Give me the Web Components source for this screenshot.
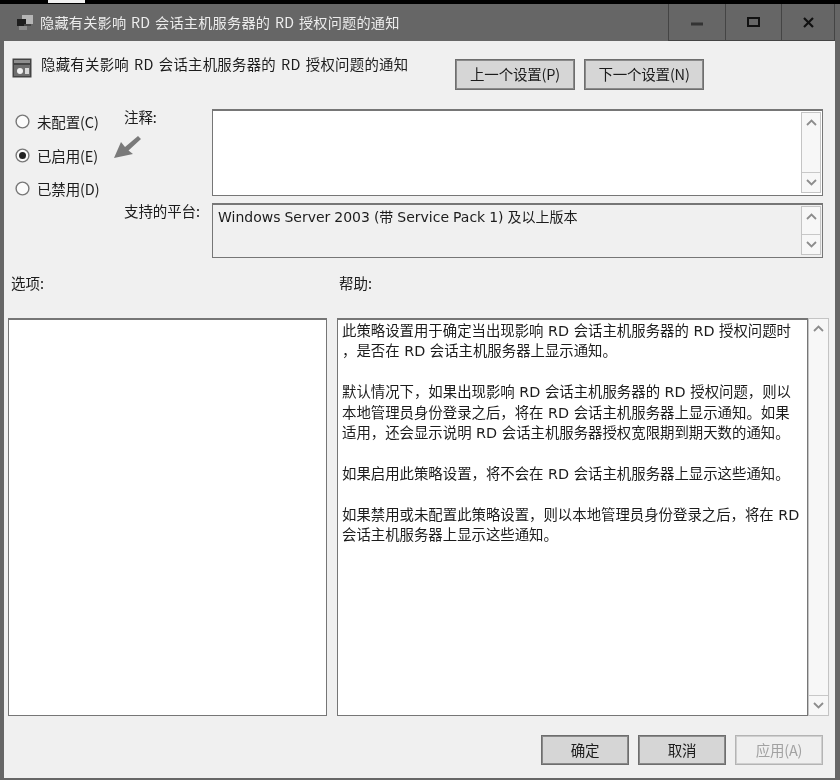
<!DOCTYPE html>
<html lang="zh">
<head>
<meta charset="utf-8">
<title>隐藏有关影响 RD 会话主机服务器的 RD 授权问题的通知</title>
<style>
  html, body { margin: 0; padding: 0; background: #666; }
  body {
    width: 840px;
    height: 780px;
    overflow: hidden;
    font-family: "Noto Sans CJK SC", "DejaVu Sans", sans-serif;
    font-size: 14px;
    color: #1c1c1c;
  }
</style>
</head>
<body>
<gp-dialog>
  <gp-header></gp-header>
  <gp-settings></gp-settings>
  <gp-panes></gp-panes>
  <gp-footer></gp-footer>
</gp-dialog>

<script>
const TEXT_FONT = `"DejaVu Sans", "Noto Sans CJK SC", sans-serif`;
const DIALOG_TITLE = '隐藏有关影响 RD 会话主机服务器的 RD 授权问题的通知';

class GpButton extends HTMLElement {
  constructor() {
    super();
    this.shadowDOM = this.attachShadow({mode: 'open'});
    this.shadowDOM.innerHTML = `
      <style>
        :host {
          display: flex;
          align-items: center;
          justify-content: center;
          box-sizing: border-box;
          width: var(--w, 88px);
          height: var(--h, 30px);
          padding-bottom: 2px;
          background: #d6d6d6;
          border: 1px solid #6e6e6e;
          outline: 1px solid #8a8a8a;
          outline-offset: -2px;
          font-size: 14.5px;
          letter-spacing: -0.2px;
          color: #1c1c1c;
        }
        :host([disabled]) {
          background: #efefef;
          border-color: #b4b4b4;
          outline-color: #cfcfcf;
          color: #a2a2a2;
        }
      </style>
      <slot></slot>
    `;
  }
}

class GpRadio extends HTMLElement {
  constructor() {
    super();
    this.shadowDOM = this.attachShadow({mode: 'open'});
    this.shadowDOM.innerHTML = `
      <style>
        :host {
          display: flex;
          align-items: center;
          gap: 7px;
          height: 33.5px;
          padding-left: 11px;
          font-size: 14.5px;
          letter-spacing: -0.15px;
        }
        svg { flex: none; }
      </style>
      <svg width="15" height="15" viewBox="0 0 15 15">
        <circle cx="7.5" cy="7.5" r="6.4" fill="#fbfbfb" stroke="#777" stroke-width="1.4"/>
        ${this.hasAttribute('checked') ? '<circle cx="7.5" cy="7.5" r="3.5" fill="#222"/>' : ''}
      </svg>
      <span><slot></slot></span>
    `;
  }
}

class GpScrollbar extends HTMLElement {
  constructor() {
    super();
    this.shadowDOM = this.attachShadow({mode: 'open'});
    this.shadowDOM.innerHTML = `
      <style>
        :host {
          display: flex;
          flex-direction: column;
          justify-content: space-between;
          box-sizing: border-box;
          flex: none;
          width: var(--bar-w, 20px);
          border: 1px solid #c4c4c4;
          background: #f7f7f7;
        }
        div {
          display: flex;
          align-items: center;
          justify-content: center;
          height: 19px;
        }
        div:first-child { border-bottom: 1px solid #c8c8c8; }
        div:last-child { border-top: 1px solid #c8c8c8; }
      </style>
      <div><svg width="11" height="7" viewBox="0 0 11 7"><path d="M1 6 L5.5 1.5 L10 6" fill="none" stroke="#8c8c8c" stroke-width="1.8"/></svg></div>
      <div><svg width="11" height="7" viewBox="0 0 11 7"><path d="M1 1 L5.5 5.5 L10 1" fill="none" stroke="#8c8c8c" stroke-width="1.8"/></svg></div>
    `;
  }
}

class GpTextbox extends HTMLElement {
  constructor() {
    super();
    this.shadowDOM = this.attachShadow({mode: 'open'});
    this.shadowDOM.innerHTML = `
      <style>
        :host {
          display: flex;
          box-sizing: border-box;
          background: #fff;
          border: 1px solid #767676;
          border-top-width: 2px;
          padding: 0 0 1px 0;
        }
        :host([readonly]) { background: #f0f0f0; }
        .text {
          flex: 1;
          padding: 1px 5px;
          font-family: ${TEXT_FONT};
          font-size: 14px;
          white-space: nowrap;
          word-spacing: -0.5px;
        }
        gp-scrollbar { margin: 1px 1px 1px 0; }
      </style>
      <div class="text"><slot></slot></div>
      <gp-scrollbar></gp-scrollbar>
    `;
  }
}

class GpDialog extends HTMLElement {
  constructor() {
    super();
    this.shadowDOM = this.attachShadow({mode: 'open'});
    this.shadowDOM.innerHTML = `
      <style>
        :host {
          display: flex;
          flex-direction: column;
          width: 840px;
          height: 780px;
          background: #666;
          filter: blur(0.35px);
        }
        .strip { height: 4px; background: #000; flex: none; }
        .strip i { display: block; width: 37px; height: 3px; margin-left: 48px; background: #f2f2f2; }
        .bar { display: flex; align-items: center; height: 37px; flex: none; padding-right: 5px; }
        .bar svg.app { margin-left: 15px; flex: none; }
        .bar .title {
          flex: 1;
          margin: -2px 0 0 6px;
          color: #ececec;
          font-size: 14.2px;
          letter-spacing: 0.2px;
          word-spacing: 1.4px;
          white-space: pre;
        }
        .ctl {
          display: flex;
          align-items: center;
          justify-content: center;
          box-sizing: border-box;
          width: 57px;
          height: 37px;
          border-left: 1px solid #444;
          border-bottom: 1px solid #444;
        }
        .ctl.min svg { margin-top: 4px; }
        .ctl.max { width: 56px; }
        .ctl.close { width: 54px; border-right: 1px solid #444; }
        .client {
          flex: 1;
          display: flex;
          flex-direction: column;
          margin: 0 5px 2px 4px;
          background: #f0f0f0;
        }
      </style>
      <div class="strip"><i></i></div>
      <div class="bar">
        <svg class="app" width="19" height="18" viewBox="0 0 19 18">
          <rect x="7" y="1" width="11" height="9" fill="#b5b5b5"/>
          <rect x="2" y="5" width="9" height="7" fill="#1e1e1e"/>
          <rect x="4" y="12" width="8" height="4" fill="#8b8b8b"/>
          <rect x="9" y="10" width="7" height="2" fill="#444"/>
        </svg>
        <span class="title">${DIALOG_TITLE}</span>
        <div class="ctl min"><svg width="12" height="4"><rect width="12" height="3" y="0.5" fill="#333"/></svg></div>
        <div class="ctl max"><svg width="13" height="10"><rect x="1" y="1" width="11" height="8" fill="none" stroke="#111" stroke-width="2"/></svg></div>
        <div class="ctl close"><svg width="11" height="11"><path d="M1 1 L10 10 M10 1 L1 10" stroke="#111" stroke-width="2.2"/></svg></div>
      </div>
      <div class="client"><slot></slot></div>
    `;
  }
}

class GpHeader extends HTMLElement {
  constructor() {
    super();
    this.shadowDOM = this.attachShadow({mode: 'open'});
    this.shadowDOM.innerHTML = `
      <style>
        :host {
          display: flex;
          box-sizing: border-box;
          height: 68px;
          padding: 18px 0 0 8px;
          flex: none;
        }
        svg { flex: none; margin-top: -1px; }
        .title {
          width: 414px;
          margin-left: 9px;
          margin-top: -2px;
          font-size: 14.4px;
          line-height: 14px;
          letter-spacing: 0.27px;
          word-spacing: 1.6px;
          white-space: pre;
        }
        .nav { display: flex; gap: 9px; --w: 120px; --h: 31px; }
      </style>
      <svg width="20" height="20" viewBox="0 0 20 20">
        <rect x="0.5" y="0.5" width="19" height="19" fill="#444"/>
        <rect x="2" y="2" width="16" height="3" fill="#8e8e8e"/>
        <rect x="2" y="7" width="16" height="11" fill="#6e6e6e"/>
        <circle cx="8" cy="13" r="3" fill="#f1f1f1"/>
        <rect x="13" y="10" width="4" height="6" fill="#d8d8d8"/>
      </svg>
      <div class="title">${DIALOG_TITLE}</div>
      <div class="nav">
        <gp-button>上一个设置(P)</gp-button>
        <gp-button>下一个设置(N)</gp-button>
      </div>
    `;
  }
}

class GpSettings extends HTMLElement {
  constructor() {
    super();
    this.shadowDOM = this.attachShadow({mode: 'open'});
    this.shadowDOM.innerHTML = `
      <style>
        :host {
          position: relative;
          display: grid;
          grid-template-columns: 120px 88px 611px;
          grid-template-rows: 87px 55px;
          row-gap: 7px;
          flex: none;
        }
        .radios { grid-row: 1 / 3; margin-top: -4px; }
        .label { font-size: 14.5px; letter-spacing: -0.1px; line-height: 16px; }
        .arrow { position: absolute; left: 109px; top: 24px; }
      </style>
      <div class="radios">
        <gp-radio>未配置(C)</gp-radio>
        <gp-radio checked>已启用(E)</gp-radio>
        <gp-radio>已禁用(D)</gp-radio>
      </div>
      <div class="label">注释:</div>
      <gp-textbox id="notes"></gp-textbox>
      <div class="label">支持的平台:</div>
      <gp-textbox id="platform" readonly>Windows Server 2003 (带 Service Pack 1) 及以上版本</gp-textbox>
      <svg class="arrow" width="30" height="26" viewBox="0 0 30 26">
        <path d="M1 25 L8 9 L12 14 L25 3 L28 6 L15.5 17.5 L20 21 Z" fill="#7a7a7a"/>
      </svg>
    `;
  }
}

class GpPanes extends HTMLElement {
  constructor() {
    super();
    this.shadowDOM = this.attachShadow({mode: 'open'});
    this.shadowDOM.innerHTML = `
      <style>
        :host {
          display: grid;
          grid-template-columns: 319px 492px;
          grid-template-rows: 60px 398px;
          column-gap: 10px;
          padding-left: 4px;
          flex: none;
        }
        .label { font-size: 14.5px; line-height: 16px; padding-top: 17px; }
        .label.opts { padding-left: 3px; }
        .label.hlp { padding-left: 2px; }
        .options {
          box-sizing: border-box;
          background: #fff;
          border: 1px solid #767676;
          border-top-width: 2px;
        }
        .help { display: flex; --bar-w: 21px; }
        .help-text {
          flex: 1;
          box-sizing: border-box;
          background: #fff;
          border: 1px solid #767676;
          border-top-width: 2px;
          padding: 1px 4px;
          font-family: ${TEXT_FONT};
          font-size: 14.4px;
          line-height: 20.4px;
          white-space: nowrap;
        }
      </style>
      <div class="label opts">选项:</div>
      <div class="label hlp">帮助:</div>
      <div class="options"></div>
      <div class="help">
        <div class="help-text">此策略设置用于确定当出现影响 RD 会话主机服务器的 RD 授权问题时<br>，是否在 RD 会话主机服务器上显示通知。<br><br>默认情况下，如果出现影响 RD 会话主机服务器的 RD 授权问题，则以<br>本地管理员身份登录之后，将在 RD 会话主机服务器上显示通知。如果<br>适用，还会显示说明 RD 会话主机服务器授权宽限期到期天数的通知。<br><br>如果启用此策略设置，将不会在 RD 会话主机服务器上显示这些通知。<br><br>如果禁用或未配置此策略设置，则以本地管理员身份登录之后，将在 RD<br>会话主机服务器上显示这些通知。</div>
        <gp-scrollbar></gp-scrollbar>
      </div>
    `;
  }
}

class GpFooter extends HTMLElement {
  constructor() {
    super();
    this.shadowDOM = this.attachShadow({mode: 'open'});
    this.shadowDOM.innerHTML = `
      <style>
        :host {
          display: flex;
          justify-content: flex-end;
          gap: 9px;
          padding: 19px 12px 0 0;
          flex: none;
        }
      </style>
      <gp-button>确定</gp-button>
      <gp-button>取消</gp-button>
      <gp-button disabled>应用(A)</gp-button>
    `;
  }
}

customElements.define('gp-button', GpButton);
customElements.define('gp-radio', GpRadio);
customElements.define('gp-scrollbar', GpScrollbar);
customElements.define('gp-textbox', GpTextbox);
customElements.define('gp-dialog', GpDialog);
customElements.define('gp-header', GpHeader);
customElements.define('gp-settings', GpSettings);
customElements.define('gp-panes', GpPanes);
customElements.define('gp-footer', GpFooter);
</script>
</body>
</html>
